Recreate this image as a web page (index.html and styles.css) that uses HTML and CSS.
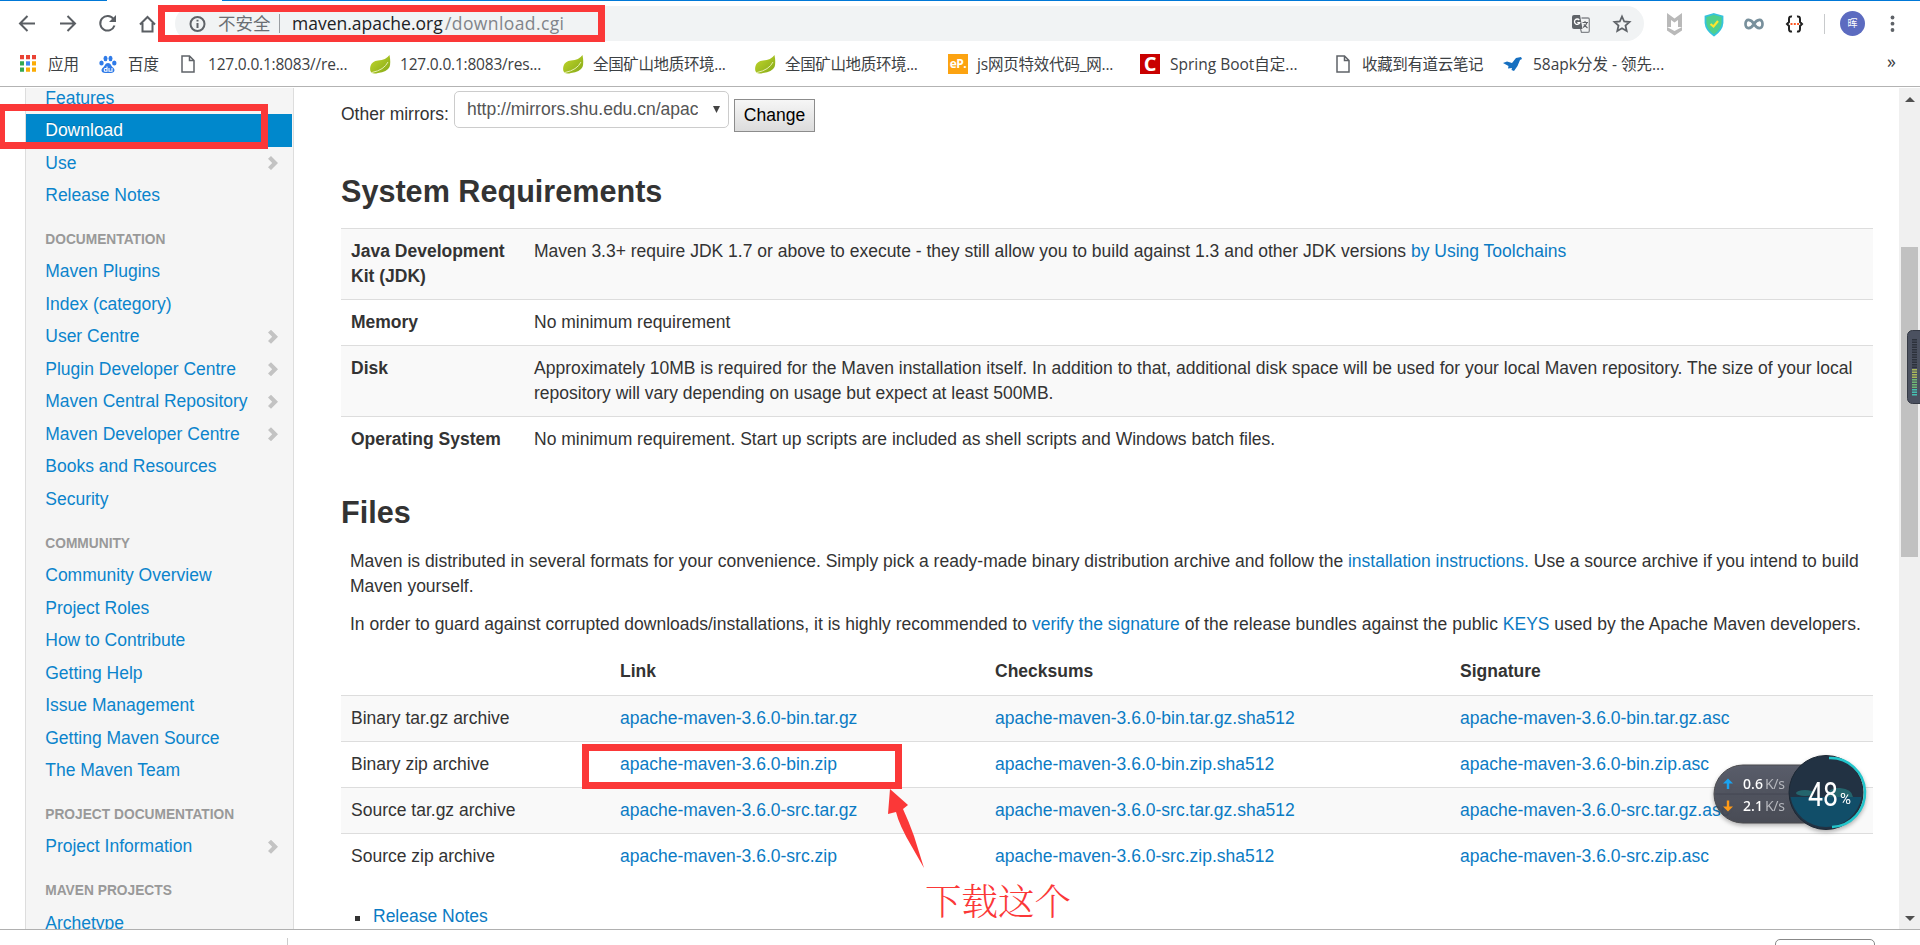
FILE: index.html
```html
<!DOCTYPE html>
<html lang="en">
<head>
<meta charset="utf-8">
<title>Maven – Download Apache Maven</title>
<link rel="stylesheet" href="styles.css">
</head>
<body>
<div class="screen">
  <header class="chrome">
    <div class="tabline"><i></i><b></b></div>
    <div class="toolbar">
      <svg class="navs" width="158" height="36" viewBox="0 0 158 36" fill="none" stroke="#5a5e63" stroke-width="2">
        <path d="M35 17.500H20M27.500 10L20 17.500L27.500 25"/>
        <path d="M60 17.500H75M67.500 10L75 17.500L67.500 25"/>
        <path d="M113.500 13A7.300 7.300 0 1 0 114.500 19.500"/><path d="M116 9V16H109Z" fill="#5a5e63" stroke="none"/>
        <path d="M140 18.500L147.500 11L155 18.500M142.500 17V25.500H152.500V17"/>
      </svg>
      <div class="omni">
        <svg width="18" height="18" viewBox="0 0 18 18" fill="none" stroke="#5f6368" stroke-width="2"><circle cx="8.500" cy="9" r="7"/><path d="M8.500 8V13M8.500 4.800V6.600"/></svg>
        <span class="insecure">不安全</span><span class="sep"></span>
        <span class="host">maven.apache.org</span><span class="path">/download.cgi</span>
        <svg class="tr" width="18" height="20" viewBox="0 0 18 20"><path d="M2 1H8L10.500 15H2Q0 15 0 13V3Q0 1 2 1Z" fill="#5f6368"/><path d="M9.500 4H16Q17.300 4 17.300 5.300V17Q17.300 18.300 16 18.300H9.500L8.500 15" fill="none" stroke="#85888c" stroke-width="1.300"/><path d="M7.300 6A2.700 2.700 0 1 0 7.700 8.700H5.300" fill="none" stroke="#fff" stroke-width="1.300"/><path d="M10.500 8.500H16M13 7V8.500M15 8.500Q14 12 11 13.500M11.800 10.500L15.500 14" fill="none" stroke="#5f6368" stroke-width="1.100"/></svg>
        <svg class="star" width="20" height="20" viewBox="0 0 20 20" fill="none" stroke="#5f6368" stroke-width="1.800"><path d="M10 2.500L12.200 7.500L17.500 8L13.500 11.600L14.700 17L10 14.200L5.300 17L6.500 11.600L2.500 8L7.800 7.500Z"/></svg>
      </div>
      <svg class="exts" width="276" height="36" viewBox="1644 0 276 36">
        <path d="M1667 8L1674.500 13.500L1682 8V22H1678V15L1674.500 17.500L1671 15V22H1667Z" fill="#b9b9b9"/><path d="M1667 22.500L1674.500 26.500L1682 22.500V26L1674.500 31L1667 26Z" fill="#b9b9b9" transform="translate(0 -.5)"/>
        <path d="M1714 9L1722.500 11.500V18Q1722 25 1714 30.500Q1706 25 1705.500 18V11.500Z" fill="#4fd08d" stroke="#35c3dc" stroke-width="1.800"/><path d="M1710.500 19L1713.500 21.500L1718 16" fill="none" stroke="#ffe52e" stroke-width="2.200"/>
        <path d="M1754 19C1751 14 1745.500 13 1745.500 19S1751 24 1754 19S1762.500 13 1762.500 19S1757 24 1754 19Z" fill="none" stroke="#78909c" stroke-width="2.700"/>
        <path d="M1792 11.500Q1789 11 1789 14V17L1787 19L1789 21V24Q1789 27 1792 26.500M1797 11.500Q1800 11 1800 14V17L1802 19L1800 21V24Q1800 27 1797 26.500" fill="none" stroke="#222" stroke-width="2"/><path d="M1790.500 19H1799" stroke="#ff5722" stroke-width="2" stroke-dasharray="2 1.300"/>
        <path d="M1824.500 9V29" stroke="#c8cacc"/>
        <circle cx="1852.500" cy="18.500" r="12.500" fill="#5c6bc0"/><text x="1847.500" y="22" font-size="10" fill="#fff">晖</text>
        <g fill="#5f6368"><circle cx="1892.500" cy="12.500" r="1.900"/><circle cx="1892.500" cy="18.700" r="1.900"/><circle cx="1892.500" cy="25" r="1.900"/></g>
      </svg>
    </div>
    <nav class="bookmarks">
      <svg class="bi" style="left:20px" width="16" height="17" viewBox="0 0 16 17"><path d="M0 0h4v4.300h-4zM6 0h4v4.300h-4zM12 0h4v4.300h-4z" fill="#ea4335"/><path d="M0 6.300h4v4.300h-4zM0 12.500h4v4.300h-4z" fill="#34a853"/><path d="M6 6.300h4v4.300h-4z" fill="#4285f4"/><path d="M12 6.300h4v4.300h-4zM6 12.500h4v4.300h-4zM12 12.500h4v4.300h-4z" fill="#fbac05"/></svg>
      <span style="left:48px">应用</span>
      <svg class="bi" style="left:99px" width="18" height="20" viewBox="0 0 18 20" fill="#2f7be8"><ellipse cx="2.500" cy="8" rx="2.200" ry="2.600"/><ellipse cx="6.500" cy="3.500" rx="2" ry="2.700"/><ellipse cx="11.500" cy="3.500" rx="2" ry="2.700"/><ellipse cx="15.300" cy="8" rx="2.200" ry="2.600"/><path d="M9 8C12 8 12 11 14 12.500C17 15 15 18 12 18H6C3 18 1 15 4 12.500C6 11 6 8 9 8Z"/><path d="M8 11.500V16.300H5.800Q4.500 15 5.800 13.500H8M10 13V16.300H13V13" fill="none" stroke="#fff" stroke-width="1.100"/></svg>
      <span style="left:128px">百度</span>
      <svg class="bi" style="left:181px" width="14" height="18" viewBox="0 0 14 18" fill="none" stroke="#5f6368" stroke-width="1.500"><path d="M1 1H8.500L13 5.500V17H1ZM8.500 1V5.500H13"/></svg>
      <span class="tight" style="left:208px">127.0.0.1:8083//re...</span>
      <svg class="bi" style="left:370px" width="21" height="20"><use href="#leaf"/></svg>
      <span class="tight" style="left:400px">127.0.0.1:8083/res...</span>
      <svg class="bi" style="left:563px" width="21" height="20"><use href="#leaf"/></svg>
      <span class="tight cjk" style="left:593px">全国矿山地质环境...</span>
      <svg class="bi" style="left:755px" width="21" height="20"><use href="#leaf"/></svg>
      <span class="tight cjk" style="left:785px">全国矿山地质环境...</span>
      <em class="fav ep" style="left:948px">eP.</em>
      <span class="tight" style="left:977px">js网页特效代码_网...</span>
      <em class="fav cs" style="left:1140px">C</em>
      <span style="left:1170px">Spring Boot自定...</span>
      <svg class="bi" style="left:1336px" width="14" height="18" viewBox="0 0 14 18" fill="none" stroke="#5f6368" stroke-width="1.500"><path d="M1 1H8.500L13 5.500V17H1ZM8.500 1V5.500H13"/></svg>
      <span class="tight cjk" style="left:1362px">收藏到有道云笔记</span>
      <svg class="bi plane" style="left:1503px" width="19" height="14" viewBox="0 0 19 14"><path d="M0 6L4 4.500L9 6L13 1L18 0L19 2L17 3L14.500 9L11 14L8.500 13L9 11L5 11.500L5.500 9Z" fill="#166fc0"/></svg>
      <span style="left:1533px">58apk分发 - 领先...</span>
      <span class="more" style="left:1887px">»</span>
    </nav>
  </header>

  <main class="view">
    <aside class="side">
      <ul>
        <li>Features</li>
        <li class="active">Download</li>
        <li class="sub">Use</li>
        <li>Release Notes</li>
        <li class="head">Documentation</li>
        <li>Maven Plugins</li>
        <li>Index (category)</li>
        <li class="sub">User Centre</li>
        <li class="sub">Plugin Developer Centre</li>
        <li class="sub">Maven Central Repository</li>
        <li class="sub">Maven Developer Centre</li>
        <li>Books and Resources</li>
        <li>Security</li>
        <li class="head">Community</li>
        <li>Community Overview</li>
        <li>Project Roles</li>
        <li>How to Contribute</li>
        <li>Getting Help</li>
        <li>Issue Management</li>
        <li>Getting Maven Source</li>
        <li>The Maven Team</li>
        <li class="head">Project Documentation</li>
        <li class="sub">Project Information</li>
        <li class="head">Maven Projects</li>
        <li>Archetype</li>
      </ul>
    </aside>
    <article class="body">
      <div class="mirrors">
        <label>Other mirrors:</label>
        <div class="select"><span>http://mirrors.shu.edu.cn/apac</span><svg width="7" height="7" viewBox="0 0 7 7"><path d="M0 0H7L3.500 7Z" fill="#444"/></svg></div>
        <button>Change</button>
      </div>
      <h3>System Requirements</h3>
      <table class="req">
        <tr><th>Java Development Kit (JDK)</th><td>Maven 3.3+ require JDK 1.7 or above to execute - they still allow you to build against 1.3 and other JDK versions <a>by Using Toolchains</a></td></tr>
        <tr><th>Memory</th><td>No minimum requirement</td></tr>
        <tr><th>Disk</th><td>Approximately 10MB is required for the Maven installation itself. In addition to that, additional disk space will be used for your local Maven repository. The size of your local<br>repository will vary depending on usage but expect at least 500MB.</td></tr>
        <tr><th>Operating System</th><td>No minimum requirement. Start up scripts are included as shell scripts and Windows batch files.</td></tr>
      </table>
      <h3>Files</h3>
      <p>Maven is distributed in several formats for your convenience. Simply pick a ready-made binary distribution archive and follow the <a>installation instructions.</a> Use a source archive if you intend to build<br>Maven yourself.</p>
      <p>In order to guard against corrupted downloads/installations, it is highly recommended to <a>verify the signature</a> of the release bundles against the public <a>KEYS</a> used by the Apache Maven developers.</p>
      <table class="files">
        <tr><th></th><th>Link</th><th>Checksums</th><th>Signature</th></tr>
        <tr><td>Binary tar.gz archive</td><td><a>apache-maven-3.6.0-bin.tar.gz</a></td><td><a>apache-maven-3.6.0-bin.tar.gz.sha512</a></td><td><a>apache-maven-3.6.0-bin.tar.gz.asc</a></td></tr>
        <tr><td>Binary zip archive</td><td><a>apache-maven-3.6.0-bin.zip</a></td><td><a>apache-maven-3.6.0-bin.zip.sha512</a></td><td><a>apache-maven-3.6.0-bin.zip.asc</a></td></tr>
        <tr><td>Source tar.gz archive</td><td><a>apache-maven-3.6.0-src.tar.gz</a></td><td><a>apache-maven-3.6.0-src.tar.gz.sha512</a></td><td><a>apache-maven-3.6.0-src.tar.gz.asc</a></td></tr>
        <tr><td>Source zip archive</td><td><a>apache-maven-3.6.0-src.zip</a></td><td><a>apache-maven-3.6.0-src.zip.sha512</a></td><td><a>apache-maven-3.6.0-src.zip.asc</a></td></tr>
      </table>
      <div class="bullet"><i></i><a>Release Notes</a></div>
    </article>
    <div class="scroll"><i class="up"></i><i class="thumb"></i><i class="down"></i></div>
  </main>
  <footer class="shelf"><i></i><b></b></footer>

  <div class="mark m1"></div>
  <div class="mark m2"></div>
  <div class="mark m3"></div>
  <svg class="arrow" width="38" height="80" viewBox="0 0 38 80"><path d="M3 0L21 16L16 20Q22 33 27 47L37 79L25 58Q12 36 9 23L1 25Z" fill="#fb3838"/></svg>
  <div class="note">下载这个</div>

  <svg class="meter" width="160" height="84" viewBox="0 0 160 84">
    <defs><linearGradient id="cap" x1="0" y1="0" x2="0" y2="1"><stop offset="0" stop-color="#535765"/><stop offset="1" stop-color="#42454f"/></linearGradient></defs>
    <path d="M32 14H100V72H32A29 29 0 0 1 32 14Z" fill="url(#cap)" fill-opacity=".95" stroke="#4a4a4e"/>
    <path d="M4 43H82" stroke="#444753"/>
    <g fill="#1aa3f0"><path d="M12 32.500L17 27.500L22 32.500Z"/><path d="M15.800 31h2.400v7h-2.400z"/></g>
    <g fill="#ff9a17"><path d="M12 55.500L17 60.500L22 55.500Z"/><path d="M15.800 49.500h2.400v7h-2.400z"/></g>
    <g font-family="'Noto Sans',sans-serif" font-size="14"><text x="32" y="38" fill="#fff" font-weight="500" textLength="20">0.6</text><text x="54" y="38" fill="#b5b7bd" textLength="20">K/s</text><text x="32" y="59.500" fill="#fff" font-weight="500" textLength="20">2.1</text><text x="54" y="59.500" fill="#b5b7bd" textLength="20">K/s</text></g>
    <circle cx="115" cy="41.500" r="37" fill="#223243" stroke="#1c2733"/>
    <ellipse cx="94" cy="42" rx="9" ry="3" fill="#24656d"/><path d="M115 46Q117 36 129 37Q141 38 142 46Z" fill="#24656d"/>
    <path d="M79.500 46H150.500A36 36 0 0 1 79.500 46Z" fill="#114e69"/>
    <path d="M118 7A34.500 34.500 0 0 1 121 76" fill="none" stroke="#22c5cb" stroke-width="2.500"/>
    <text x="97" y="55" font-family="Roboto,sans-serif" font-size="33" fill="#fff" textLength="30" lengthAdjust="spacingAndGlyphs">48</text><text x="129" y="53" font-family="Roboto,sans-serif" font-size="15" fill="#fff" textLength="11" lengthAdjust="spacingAndGlyphs">%</text>
  </svg>
  <svg class="gauge" width="13" height="74" viewBox="0 0 13 74"><rect x=".5" y=".5" width="18" height="73" rx="5" fill="#4b5160" stroke="#343944"/><path d="M7.500 9V38" stroke="#2d323c" stroke-width="5" stroke-dasharray="1.500 1"/><path d="M7.500 39V48" stroke="#a9b85a" stroke-width="5" stroke-dasharray="1.500 1"/><path d="M7.500 49V58" stroke="#6fb974" stroke-width="5" stroke-dasharray="1.500 1"/><path d="M7.500 59V66" stroke="#45c0b0" stroke-width="5" stroke-dasharray="1.500 1"/></svg>
  <svg width="0" height="0" class="defs"><defs>
    <linearGradient id="lg" x1="0" y1="0" x2="1" y2="1"><stop offset="0" stop-color="#c5d92d"/><stop offset="1" stop-color="#84a817"/></linearGradient>
    <g id="leaf"><path d="M19.500 0Q21 8 19.500 12Q17 17 8 18Q3 19.500 1 17Q-.5 15 .5 11Q2 6 8 5.500Q16 5 19.500 0Z" fill="url(#lg)"/><path d="M2 17.500Q14 15 18 7" fill="none" stroke="#e6efb0" stroke-width="1"/></g>
  </defs></svg>
</div>
</body>
</html>
```
FILE: styles.css
```css
* { box-sizing: border-box; }
body { margin: 0; font-family: "Liberation Sans", "Noto Sans CJK SC", sans-serif; font-size: 17.5px; line-height: 25px; color: #333; background: #fff; }
.screen { position: relative; width: 1920px; height: 945px; overflow: hidden; display: flex; flex-direction: column; }
.chrome { height: 88px; flex: none; border-bottom: 1px solid #fff; background: linear-gradient(#b3b3b3, #b3b3b3) 0 86px / 100% 1px no-repeat #fff; font-family: "Open Sans", "Noto Sans CJK SC", sans-serif; }
.tabline { height: 1px; display: flex; justify-content: space-between; }
.tabline i { width: 107px; background: #0078d7; }
.tabline b { width: 1698px; background: #0078d7; }
.toolbar { display: flex; margin-top: 1px; height: 39px; }
.navs { margin-top: 4px; flex: none; }
.omni { margin: 4px 0 0 17px; width: 1469px; height: 35px; border-radius: 18px; background: #f1f3f4; display: flex; align-items: center; padding: 0 12px 0 14px; flex: none; font-size: 17.5px; }
.insecure { margin-left: 11px; color: #6a6e73; width: 54px; }
.sep { width: 1px; height: 19px; background: #9a9da1; margin: 0 12px 0 7px; }
.host { color: #202124; width: 153px; white-space: nowrap; }
.path { color: #80848a; white-space: nowrap; letter-spacing: .4px; }
.tr { margin-left: auto; margin-right: 22px; }
.exts { margin-top: 3px; flex: none; }
.bookmarks { position: relative; height: 46px; font-size: 15.5px; color: #3c4043; }
.bookmarks > * { position: absolute; top: 11px; white-space: nowrap; line-height: 24px; }
.bookmarks > .bi { top: 14px; }
.bookmarks > .plane { top: 16px; }
.tight { letter-spacing: -.2px; }
.cjk { letter-spacing: -.35px; }
.fav { width: 20px; height: 20px; color: #fff; font: bold 12px/20px "Open Sans", sans-serif; text-align: center; }
.bookmarks > .fav { top: 13px; line-height: 19px; }
.ep { background: #fca311; letter-spacing: -.5px; }
.cs { background: #c90000; font-size: 20px; }
.bookmarks > .more { top: 8px; font-size: 18px; }

.view { height: 841px; flex: none; display: flex; overflow: hidden; background: #fff; }
.side { width: 269px; margin-left: 25px; flex: none; background: #f5f5f5; border: 1px solid #ddd; border-width: 0 1px; }
.side ul { list-style: none; margin: -6.25px 0 0; padding: 0 1px 0 0; }
.side li { height: 32.5px; padding: 3.75px 19.25px; color: #0b84cc; white-space: nowrap; }
.side .active { background: #0088cc; color: #fff; text-shadow: 0 -1px 0 rgba(0, 0, 0, .2); }
.side .head { margin-top: 11.25px; font-size: 13.75px; font-weight: bold; color: #999; text-transform: uppercase; }
.side .sub { display: flex; justify-content: space-between; padding-right: 14px; }
.side .sub::after { content: ""; width: 10px; height: 14px; margin-top: 5.5px; background: #c3c3c3; clip-path: polygon(0 20%, 30% 0, 100% 50%, 30% 100%, 0 80%, 42% 50%); }
.body { width: 1532px; margin-left: 47px; flex: none; }
.mirrors { display: flex; height: 45px; padding-top: 3px; }
.mirrors label { padding-top: 11px; width: 113px; white-space: nowrap; }
.select { width: 275px; height: 37px; border: 1px solid #ccc; border-radius: 5px; display: flex; justify-content: space-between; padding: 5px 8px 0 12px; color: #555; }
.select svg { margin-top: 9px; }
.select span { width: 231px; overflow: hidden; white-space: nowrap; }
.mirrors button { margin: 8px 0 0 5px; width: 81px; height: 33px; padding: 0; border: 1px solid #8c8c8c; background: linear-gradient(#f6f6f6, #dcdcdc); font: 17.5px/25px "Liberation Sans", sans-serif; color: #000; }
h3 { font-size: 30.6px; line-height: 50px; margin: 0; }
.mirrors + h3 { margin-top: 33px; }
table { border-collapse: separate; border-spacing: 0; width: 1532px; table-layout: fixed; }
th, td { padding: 10px; border-top: 1px solid #ddd; text-align: left; vertical-align: top; font-weight: normal; height: 46px; }
th { font-weight: bold; }
.req { margin-top: 12px; }
.req td { white-space: nowrap; }
.req th { width: 183px; }
.req tr:nth-child(odd) > *, .files tr:nth-child(even) > * { background: #f9f9f9; }
a { color: #0b7bc4; }
p { margin: 0 0 12.5px 9px; white-space: nowrap; }
.req + h3 { margin: 25px 0 12px; height: 50px; }
.files tr:first-child th { border-top: 0; }
.files th:nth-child(1) { width: 269px; }
.files th:nth-child(2) { width: 375px; }
.files th:nth-child(3) { width: 465px; }
.bullet { display: flex; align-items: center; margin: 25px 0 0 14px; height: 25px; }
.bullet i { width: 5px; height: 5px; background: #333; margin-right: 13px; margin-top: 4px; }
.scroll { width: 21px; margin-left: auto; background: #f0f0f0; display: flex; flex-direction: column; align-items: center; }
.up, .down { border: solid transparent; border-width: 0 5px 5px; border-bottom-color: #505050; margin-top: 9px; }
.thumb { width: 17px; height: 310px; background: #c1c1c1; margin-top: 145px; }
.down { border-width: 5px 5px 0; border-top-color: #505050; margin-top: auto; margin-bottom: 8px; }
.shelf { height: 16px; flex: none; border-top: 1px solid #b0b0b0; display: flex; background: #fff; }
.shelf i { margin: 8px 0 0 287px; width: 1px; background: #ccc; }
.shelf b { margin: 9px 0 0 1487px; width: 100px; height: 20px; border: 1px solid #888; border-radius: 5px; flex: none; }

.mark { position: absolute; border: 7px solid #fb3838; }
.m1 { left: 158px; top: 5px; width: 447px; height: 37px; }
.m2 { left: -2px; top: 104px; width: 270px; height: 45px; }
.m3 { left: 582px; top: 744px; width: 320px; height: 45px; }
.arrow { position: absolute; left: 887px; top: 789px; }
.note { position: absolute; left: 925px; top: 877px; font: 300 36.5px/44px "Noto Serif CJK SC", "Noto Sans CJK SC", sans-serif; color: #fb3838; white-space: nowrap; }
.meter { position: absolute; left: 1711px; top: 751px; filter: drop-shadow(0 2px 2px rgba(0, 0, 0, .3)); }
.gauge { position: absolute; left: 1907px; top: 330px; }
.defs { position: absolute; }
```
